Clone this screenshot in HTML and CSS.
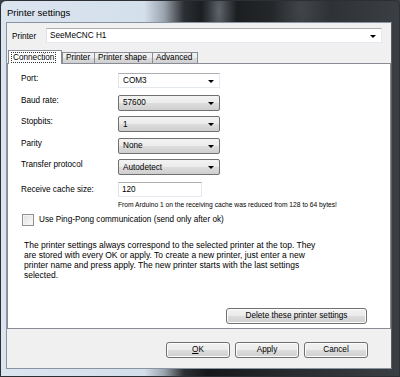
FILE: index.html
```html
<!DOCTYPE html>
<html>
<head>
<meta charset="utf-8">
<link rel="stylesheet" href="styles.css">
</head>
<body>
<div class="window">
  <div class="titlebar">Printer settings</div>
  <div class="client">
    <div class="printer-row">
      <span class="printer-label">Printer</span>
      <div class="combo combo-edit printer-combo"><span class="combo-text">SeeMeCNC H1</span><i class="arrow"></i></div>
    </div>
    <div class="tabs">
      <div class="tab tab-active"><span class="focus">Connection</span></div>
      <div class="tab">Printer</div>
      <div class="tab">Printer shape</div>
      <div class="tab">Advanced</div>
    </div>
    <div class="panel">
      <div class="form">
        <span class="lbl">Port:</span>
        <div class="combo combo-edit"><span class="combo-text">COM3</span><i class="arrow"></i></div>
        <span class="lbl">Baud rate:</span>
        <div class="combo"><span class="combo-text">57600</span><i class="arrow"></i></div>
        <span class="lbl">Stopbits:</span>
        <div class="combo"><span class="combo-text">1</span><i class="arrow"></i></div>
        <span class="lbl">Parity</span>
        <div class="combo"><span class="combo-text">None</span><i class="arrow"></i></div>
        <span class="lbl">Transfer protocol</span>
        <div class="combo"><span class="combo-text">Autodetect</span><i class="arrow"></i></div>
        <span class="lbl lbl-cache">Receive cache size:</span>
        <div class="textbox">120</div>
      </div>
      <p class="note">From Arduino 1 on the receiving cache was reduced from 128 to 64 bytes!</p>
      <div class="check-row">
        <span class="checkbox"></span>
        <span class="check-text">Use Ping-Pong communication (send only after ok)</span>
      </div>
      <p class="info">The printer settings always correspond to the selected printer at the top. They are stored with every OK or apply. To create a new printer, just enter a new printer name and press apply. The new printer starts with the last settings selected.</p>
      <div class="delete-row">
        <button class="btn btn-delete">Delete these printer settings</button>
      </div>
    </div>
    <div class="buttons">
      <button class="btn btn-dlg"><u>O</u>K</button>
      <button class="btn btn-dlg">Apply</button>
      <button class="btn btn-dlg">Cancel</button>
    </div>
  </div>
</div>
</body>
</html>
```

FILE: styles.css
```css
* { box-sizing: border-box; }

html, body {
  margin: 0;
  padding: 0;
  width: 400px;
  height: 377px;
  overflow: hidden;
  background: #3a3f45;
}

body {
  font-family: "Liberation Sans", Arial, sans-serif;
  font-size: 8.2px;
  color: #000;
}

.window {
  width: 400px;
  height: 377px;
  border: 1px solid #2c2f33;
  border-radius: 6px 6px 0 0;
  background:
    radial-gradient(ellipse 18px 60px at 218px 10px, rgba(150,160,170,0.55), rgba(150,160,170,0) 100%),
    radial-gradient(ellipse 30px 60px at 300px 8px, rgba(110,115,120,0.35), rgba(110,115,120,0) 100%),
    linear-gradient(to right, #dbe5f0 0%, #d3dfeb 36%, #9aa3ad 41%, #2b2e32 46%, #15171a 52%, #26292c 70%, #3b3e42 100%);
  display: flex;
  flex-direction: column;
}

.titlebar {
  height: 21px;
  padding: 6px 0 0 6px;
  font-size: 9.5px;
  color: #000;
  line-height: 11px;
}

.client {
  margin: 0 7px 0 5px;
  height: 347px;
  background: #f0f0f0;
  border: 1px solid #8894a3;
  border-right-color: #5b5f63;
  display: flex;
  flex-direction: column;
}

.printer-row {
  display: flex;
  align-items: center;
  padding: 4px 0 0 5px;
  height: 20px;
}

.printer-label {
  width: 34px;
  padding-top: 3px;
}

.combo {
  position: relative;
  height: 16px;
  border: 1px solid #707070;
  border-radius: 2px;
  background: linear-gradient(#f3f3f3 0%, #ebebeb 50%, #dddddd 51%, #cfcfcf 100%);
  display: flex;
  align-items: center;
  padding-left: 4px;
}

.combo-edit {
  background: #fff;
  border-color: #e3e9ef;
  border-top-color: #abadb3;
  border-left-color: #e2e3ea;
  border-radius: 0;
}

.printer-combo {
  width: 336px;
  height: 15px;
  padding-left: 3px;
}

.combo-text {
  line-height: 10px;
  padding-top: 1px;
}

.arrow {
  position: absolute;
  right: 5px;
  top: 6px;
  width: 0;
  height: 0;
  border-left: 3px solid transparent;
  border-right: 3px solid transparent;
  border-top: 3px solid #000;
}

.tabs {
  display: flex;
  align-items: flex-end;
  height: 20px;
  padding-left: 1px;
  margin-top: 0;
}

.tab {
  height: 11px;
  border: 1px solid #898c95;
  border-bottom: none;
  background: linear-gradient(#f2f2f2 0%, #ebebeb 50%, #dddddd 51%, #cfcfcf 100%);
  padding: 0 3px;
  line-height: 10px;
  margin-left: -1px;
}

.tab:nth-child(2) { width: 33px; }
.tab:nth-child(3) { width: 59px; }
.tab:nth-child(4) { width: 46px; }

.tab-active {
  height: 14px;
  width: 54px;
  background: #fff;
  margin-left: 0;
  margin-right: 1px;
  position: relative;
  z-index: 1;
  margin-bottom: -1px;
  padding: 1px 2px 0 2px;
  border-color: #898c95;
}

.focus {
  display: inline-block;
  border: 1px dotted #333;
  padding: 0 1px;
  line-height: 9px;
}

.panel {
  margin: 0 0 0 0;
  height: 266px;
  background: #fff;
  border: 1px solid #898c95;
  display: flex;
  flex-direction: column;
  padding: 9px 0 0 13px;
}

.form {
  display: grid;
  grid-template-columns: 97px 102px;
  grid-auto-rows: 16px;
  row-gap: 5.5px;
}

.form .combo {
  height: 16px;
}

.lbl {
  padding-top: 1px;
  line-height: 10px;
}

.lbl-cache {
  padding-top: 4px;
}

.form > :nth-child(2) { height: 15px; }

.textbox {
  margin-top: 1px;
  width: 84px;
  height: 15px;
  background: #fff;
  border: 1px solid #e3e9ef;
  border-top-color: #abadb3;
  border-left-color: #e2e3ea;
  padding: 1px 0 0 3px;
  line-height: 11px;
}

.note {
  margin: 3px 0 0 97px;
  font-size: 6.7px;
  line-height: 10px;
}

.check-row {
  display: flex;
  align-items: center;
  margin-top: 4px;
  padding-left: 1px;
  height: 13px;
}

.checkbox {
  width: 12px;
  height: 12px;
  border: 1px solid #8f8f8f;
  background: linear-gradient(135deg, #e0e0e0, #fbfbfb);
  box-shadow: inset 0 0 0 1px #f4f4f4;
  margin-right: 5px;
}

.check-text {
  line-height: 10px;
}

.info {
  margin: 13px 0 0 3px;
  width: 300px;
  font-size: 8.5px;
  line-height: 10.3px;
}

.delete-row {
  margin-top: auto;
  margin-bottom: 4px;
  display: flex;
  justify-content: flex-end;
  padding-right: 23px;
}

.btn {
  font-family: "Liberation Sans", Arial, sans-serif;
  font-size: 8.2px;
  color: #000;
  height: 16px;
  padding: 0;
  border: 1px solid #707070;
  border-radius: 3px;
  background: linear-gradient(#f2f2f2 0%, #ebebeb 50%, #dddddd 51%, #cfcfcf 100%);
  box-shadow: inset 0 0 0 1px #fcfcfc;
  line-height: 12px;
}

.btn-delete {
  width: 141px;
}

.buttons {
  display: flex;
  justify-content: flex-end;
  gap: 5px;
  padding: 13px 23px 0 0;
}

.btn-dlg {
  width: 64px;
}

.btn u {
  text-decoration: underline;
}
```
